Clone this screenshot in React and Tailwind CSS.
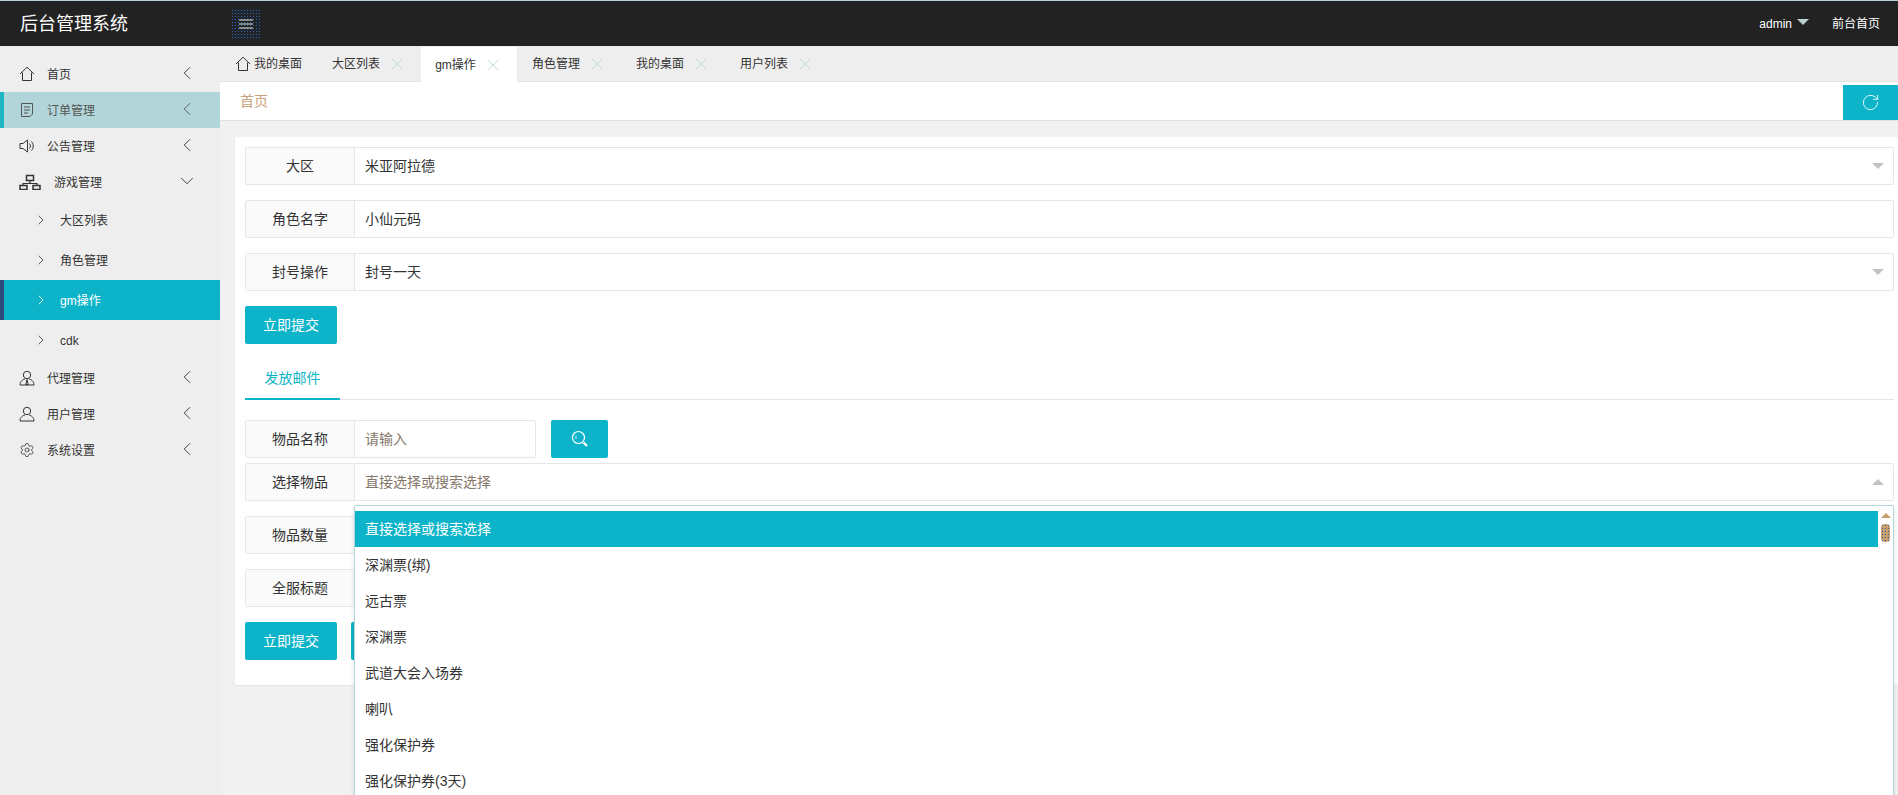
import React from "react";
import { ChevronLeft, ChevronDown, ChevronRight, X, RotateCw, Settings } from "lucide-react";

const Svg = ({ children, className = "", w = 16, h = 16, vb }) => (
  <svg width={w} height={h} viewBox={vb || `0 0 ${w} ${h}`} fill="none" stroke="currentColor" strokeWidth="1" className={`shrink-0 ${className}`}>
    {children}
  </svg>
);

const HomeIcon = ({ className }) => (
  <Svg className={className}>
    <path d="M1 8 L8 1.2 L15 8" />
    <path d="M3.5 6.5 V14.5 H12.5 V6.5" />
  </Svg>
);
const OrderIcon = () => (
  <Svg>
    <path d="M2.5 1.5 H13.5 V12 L11 14.5 H2.5 Z" />
    <path d="M5 5 H11 M5 8 H11 M5 11 H9" />
  </Svg>
);
const SpeakerIcon = () => (
  <Svg>
    <path d="M1 5.5 H4 L8.5 2 V14 L4 10.5 H1 Z" />
    <path d="M10.5 5.5 C11.7 7 11.7 9 10.5 10.5 M12.5 3.5 C14.8 6 14.8 10 12.5 12.5" />
  </Svg>
);
const SitemapIcon = () => (
  <Svg w={22} h={16}>
    <rect x="7.5" y="1.5" width="7" height="5" strokeWidth="1.5" />
    <path d="M11 7 V9.5 M4 12 V9.5 H18 V12" strokeWidth="1.2" />
    <rect x="1" y="11.5" width="7" height="4" strokeWidth="1.5" />
    <rect x="14" y="11.5" width="7" height="4" strokeWidth="1.5" />
  </Svg>
);
const UserIcon = ({ tie }) => (
  <Svg>
    <circle cx="8" cy="5" r="3.7" />
    <path d="M1 15 C1 11 4 9.5 6 9 M15 15 C15 11 12 9.5 10 9 M1 15 H15" />
    {tie && <path d="M8 9.5 L6.8 14.5 H9.2 Z" />}
  </Svg>
);

const Top = ({ icon, label, active, open, wide }) => (
  <div className={`relative flex h-9 items-center pl-[19px] text-xs ${active ? "bg-[#b2d5d9] text-[#555]" : "text-[#333]"}`}>
    {active && <span className="absolute left-0 top-0 h-full w-1 bg-[#1fb5c4]" />}
    <span className="flex w-[16px] shrink-0 items-center">{icon}</span>
    <span className={`pt-[2px] ${wide ? "ml-[19px]" : "ml-3"}`}>{label}</span>
    {open ? (
      <ChevronDown size={22} strokeWidth={1} className="absolute left-[176px] top-[6px]" />
    ) : (
      <ChevronLeft size={22} strokeWidth={1} className="absolute left-[176px] top-[6px]" />
    )}
  </div>
);

const Sub = ({ label, active }) => (
  <div className={`relative flex h-10 items-center pl-[33px] text-xs ${active ? "bg-[#0db4c9] text-white" : "text-[#333]"}`}>
    {active && <span className="absolute left-0 top-0 h-full w-1 bg-[#2a4a7a]" />}
    <ChevronRight size={16} strokeWidth={1.2} className="shrink-0" />
    <span className="ml-[11px] pt-[2px]">{label}</span>
  </div>
);

const Tab = ({ label, active, home, closable = true }) => (
  <div className={`relative flex h-[35px] shrink-0 items-center text-xs text-[#333] ${active ? "w-[96px] justify-center gap-[7px] rounded-t-[2px] bg-white" : home ? "w-[97px] pl-[15px]" : "w-[104px] pl-[15px]"}`}>
    {home && <HomeIcon className="mr-[3px]" />}
    <span>{label}</span>
    {closable && <X size={20} strokeWidth={1} className={`text-[#b7d2d6] ${active ? "" : "ml-[7px]"}`} />}
  </div>
);

const Caret = ({ up }) => (
  <span className={`absolute right-[9px] top-1/2 h-0 w-0 -translate-y-1/2 border-x-[6px] border-x-transparent ${up ? "border-b-[6px] border-b-[#c2c2c2]" : "border-t-[6px] border-t-[#c2c2c2]"}`} />
);

const Field = ({ label, children, className = "" }) => (
  <div className={`relative flex h-[38px] rounded-[2px] border border-[#e6e6e6] bg-white text-sm ${className}`}>
    <div className="flex w-[109px] shrink-0 items-center justify-center border-r border-[#e6e6e6] bg-[#fafafa] text-[#333]">{label}</div>
    <div className="flex min-w-0 flex-1 items-center pl-[10px] text-[#333]">{children}</div>
  </div>
);

const Btn = ({ children, className = "" }) => (
  <button className={`flex h-[38px] w-[92px] items-center justify-center rounded-[2px] bg-[#0db4c9] text-sm text-white ${className}`}>{children}</button>
);

const options = ["深渊票(绑)", "远古票", "深渊票", "武道大会入场券", "喇叭", "强化保护券", "强化保护券(3天)"];

export default function App() {
  return (
    <div className="flex h-[795px] w-[1898px] flex-col overflow-hidden bg-[#f1f1f1] [font-family:'Liberation_Sans','Noto_Sans_CJK_SC',sans-serif]">
      <header className="flex h-[46px] shrink-0 items-center border-t border-[#b2d5d9] bg-[#222222] text-white">
        <div className="w-[231px] pl-5 text-lg">后台管理系统</div>
        <div className="flex h-[30px] w-[30px] items-center justify-center bg-[#20252b] bg-[radial-gradient(#2f62a8_0.6px,transparent_0.6px)] [background-size:3px_3px]">
          <svg width="16" height="12" viewBox="0 0 16 12" stroke="#e8e4dc" strokeWidth="1.2"><path d="M1 2 H15 M1 6 H15 M1 10 H15" /></svg>
        </div>
        <div className="ml-auto flex items-center pr-[18px] text-xs">
          <span>admin</span>
          <span className="ml-[5px] mb-[3px] h-0 w-0 border-x-[6px] border-t-[6px] border-x-transparent border-t-[#b9cfd0]" />
          <span className="ml-[23px]">前台首页</span>
        </div>
      </header>

      <div className="flex min-h-0 flex-1">
        <aside className="w-[220px] shrink-0 bg-[#eeeeee] pt-[10px]">
          <Top icon={<HomeIcon />} label="首页" />
          <Top icon={<OrderIcon />} label="订单管理" active />
          <Top icon={<SpeakerIcon />} label="公告管理" />
          <Top icon={<SitemapIcon />} label="游戏管理" open wide />
          <Sub label="大区列表" />
          <Sub label="角色管理" />
          <Sub label="gm操作" active />
          <Sub label="cdk" />
          <Top icon={<UserIcon tie />} label="代理管理" />
          <Top icon={<UserIcon />} label="用户管理" />
          <Top icon={<Settings size={16} strokeWidth={1.2} />} label="系统设置" />
        </aside>

        <main className="min-w-0 flex-1">
          <div className="flex h-9 items-end border-b border-[#e2e2e2] bg-[#eeeeee]">
            <Tab label="我的桌面" home closable={false} />
            <Tab label="大区列表" />
            <div className="-mb-px"><Tab label="gm操作" active /></div>
            <Tab label="角色管理" />
            <Tab label="我的桌面" />
            <Tab label="用户列表" />
          </div>
          <div className="flex h-[39px] items-stretch border-b border-[#e2e2e2] bg-white">
            <span className="flex items-center pl-5 text-sm text-[#c8a27c]">首页</span>
            <div className="ml-auto mt-[3px] flex w-[55px] items-center justify-center bg-[#0db4c9] text-white">
              <RotateCw size={19} strokeWidth={1.1} />
            </div>
          </div>

          <div className="pl-[15px] pt-[16px]">
            <div className="rounded-[2px] bg-white py-[10px] pl-[10px] pr-[4px] shadow-[0_1px_2px_rgba(0,0,0,0.06)]">
              <Field label="大区">米亚阿拉德<Caret /></Field>
              <Field label="角色名字" className="mt-[15px]">小仙元码</Field>
              <Field label="封号操作" className="mt-[15px]">封号一天<Caret /></Field>
              <Btn className="mt-[15px]">立即提交</Btn>

              <div className="mt-px flex h-[55px] items-end border-b border-[#e6e6e6]">
                <div className="-mb-px flex h-full w-[95px] items-center justify-center border-b-2 border-[#0db4c9] pt-[12px] text-sm text-[#0db4c9]">发放邮件</div>
              </div>

              <div className="mt-5 flex gap-[15px]">
                <Field label="物品名称" className="w-[291px]"><span className="text-[#85776a]">请输入</span></Field>
                <button className="flex h-[38px] w-[57px] items-center justify-center rounded-[2px] bg-[#0db4c9] text-white">
                  <svg width="18" height="18" viewBox="0 0 18 18" fill="none" stroke="currentColor">
                    <circle cx="7.5" cy="7.5" r="6" strokeWidth="1.2" />
                    <path d="M12.5 12.5 L16 16" strokeWidth="2.4" />
                    <path d="M5 5.5 V9" strokeWidth="0.8" />
                  </svg>
                </button>
              </div>

              <div className="relative mt-[5px]">
                <Field label="选择物品"><span className="text-[#85776a]">直接选择或搜索选择</span><Caret up /></Field>
                <div className="absolute left-[109px] top-[42px] z-10 h-[320px] w-[1540px] overflow-hidden rounded-[2px] border border-[#b2d5d9] bg-white pt-[5px] text-sm text-[#333] shadow-[0_2px_4px_rgba(0,0,0,0.12)]">
                  <div className="flex">
                    <div className="min-w-0 flex-1">
                      <div className="flex h-9 items-center bg-[#0db4c9] pl-[10px] text-white">直接选择或搜索选择</div>
                      {options.map((o, i) => (
                        <div key={i} className="flex h-9 items-center pl-[10px]">{o}</div>
                      ))}
                    </div>
                    <div className="flex w-[15px] shrink-0 flex-col items-center pt-[2px]">
                      <span className="h-0 w-0 border-x-[5px] border-b-[5px] border-x-transparent border-b-[#c8a070]" />
                      <span className="mt-[6px] h-[18px] w-[9px] rounded-[4px] bg-[#c8a070] bg-[radial-gradient(#2f62a8_0.7px,transparent_0.7px)] [background-size:3px_3px]" />
                    </div>
                  </div>
                </div>
              </div>

              <Field label="物品数量" className="mt-[15px]" />
              <Field label="全服标题" className="mt-[15px]" />
              <div className="mb-[15px] mt-[15px] flex gap-[14px]">
                <Btn>立即提交</Btn>
                <Btn />
              </div>
            </div>
          </div>
        </main>
      </div>
    </div>
  );
}
